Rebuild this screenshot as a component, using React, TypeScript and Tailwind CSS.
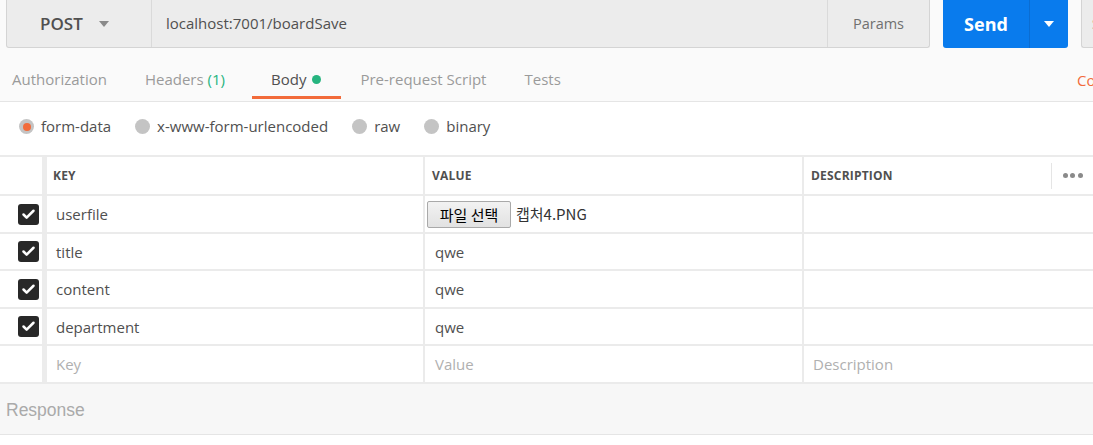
import { Check } from 'lucide-react'

const rows = [
  { key: 'userfile', value: '', file: true },
  { key: 'title', value: 'qwe' },
  { key: 'content', value: 'qwe' },
  { key: 'department', value: 'qwe' },
]

function Caret({ className }: { className: string }) {
  return (
    <svg width="10" height="6" viewBox="0 0 10 6" className={className}>
      <path d="M0 0 L10 0 L5 6 Z" fill="currentColor" />
    </svg>
  )
}

function Radio({ label, active }: { label: string; active?: boolean }) {
  return (
    <div className="flex items-center">
      <span className="w-[15px] h-[15px] rounded-full bg-[#c4c4c4] flex items-center justify-center">
        {active && <span className="w-[8px] h-[8px] rounded-full bg-[#f26b3a]" />}
      </span>
      <span className="ml-[7px] text-[15px] text-[#505050]">{label}</span>
    </div>
  )
}

export default function App() {
  return (
    <div className="w-[1093px] h-[445px] overflow-hidden bg-[#fafafa] font-['Open_Sans',sans-serif] flex flex-col">
      {/* Request bar */}
      <div className="flex h-[48px] pl-[6px] shrink-0">
        <div className="flex w-[924px] shrink-0 bg-[#ececec] border border-t-0 border-[#d4d4d4] rounded-b-[3px]">
          <div className="w-[145px] flex items-center pl-[33px] border-r border-[#dadada]">
            <span className="text-[17px] font-semibold text-[#505050]">POST</span>
            <Caret className="ml-[16px] text-[#8a8a8a]" />
          </div>
          <div className="flex-1 flex items-center pl-[14px] text-[15px] text-[#505050] border-r border-[#dadada]">
            localhost:7001/boardSave
          </div>
          <div className="w-[101px] flex items-center justify-center text-[14.5px] text-[#707070]">Params</div>
        </div>
        <div className="ml-[13px] w-[125px] shrink-0 flex bg-[#097bed] rounded-b-[3px]">
          <div className="w-[87px] flex items-center justify-center text-[18px] font-bold text-white border-r border-[#0a6dd3]">
            Send
          </div>
          <div className="flex-1 flex items-center justify-center">
            <Caret className="text-white" />
          </div>
        </div>
        <div className="ml-[13px] w-[12px] shrink-0 bg-[#ececec] border border-r-0 border-t-0 border-[#d4d4d4] rounded-bl-[3px] overflow-hidden flex items-center pl-[10px] text-[14px] text-[#707070] whitespace-nowrap">
          Save
        </div>
      </div>

      {/* Tabs */}
      <div className="mt-[10px] flex pb-[2px] border-b border-[#e5e5e5] shrink-0 text-[15px]">
        <div className="h-[41px] pl-[12px] pr-[19px] flex items-center pt-[4px] text-[#9a9a9a] border-b-[3px] border-transparent">Authorization</div>
        <div className="h-[41px] pl-[19px] pr-[27px] flex items-center pt-[4px] text-[#9a9a9a] border-b-[3px] border-transparent">
          Headers <span className="ml-[4px] text-[#26b47f]">(1)</span>
        </div>
        <div className="h-[41px] pl-[19px] pr-[20px] flex items-center pt-[4px] text-[#505050] border-b-[3px] border-[#f26b3a]">
          Body <span className="ml-[6px] w-[9px] h-[9px] rounded-full bg-[#26b47f]" />
        </div>
        <div className="h-[41px] px-[19px] flex items-center pt-[4px] text-[#9a9a9a] border-b-[3px] border-transparent">Pre-request Script</div>
        <div className="h-[41px] px-[19px] flex items-center pt-[4px] text-[#9a9a9a] border-b-[3px] border-transparent">Tests</div>
        <div className="flex-1" />
        <div className="w-[16px] shrink-0 overflow-hidden h-[41px] flex items-center pt-[4px] text-[#f26b3a] whitespace-nowrap">Cookies</div>
      </div>

      {/* Body type */}
      <div className="h-[53px] bg-white flex items-center pl-[19px] pb-[4px] gap-[24px] shrink-0">
        <Radio label="form-data" active />
        <Radio label="x-www-form-urlencoded" />
        <Radio label="raw" />
        <Radio label="binary" />
      </div>

      {/* Params table */}
      <div className="bg-white border-t-2 border-[#ebebeb] shrink-0">
        <div className="flex h-[39px] border-b-2 border-[#ebebeb] text-[12px] font-bold text-[#505050] tracking-[0.2px]">
          <div className="w-[42px]" />
          <div className="w-[381px] border-l-[5px] border-[#ececec] flex items-center pl-[6px]">KEY</div>
          <div className="w-[379px] border-l-2 border-[#ebebeb] flex items-center pl-[7px]">VALUE</div>
          <div className="flex-1 border-l-2 border-[#ebebeb] flex items-center pl-[7px]">
            DESCRIPTION
            <div className="ml-auto w-px h-[26px] bg-[#e5e5e5]" />
            <div className="w-[41px] flex items-center justify-center gap-[2.5px]">
              <span className="w-[5px] h-[5px] rounded-full bg-[#8a8a8a]" />
              <span className="w-[5px] h-[5px] rounded-full bg-[#8a8a8a]" />
              <span className="w-[5px] h-[5px] rounded-full bg-[#8a8a8a]" />
            </div>
          </div>
        </div>

        {rows.map(r => (
          <div key={r.key} className="flex h-[37.5px] border-b-2 border-[#ebebeb] text-[15px] text-[#505050]">
            <div className="w-[42px] flex items-center pl-[18px] pt-[1px]">
              <span className="w-[21px] h-[21px] rounded-[3px] bg-[#282828] flex items-center justify-center">
                <Check size={15} strokeWidth={4} className="text-white" />
              </span>
            </div>
            <div className="w-[381px] border-l-[5px] border-[#ececec] flex items-center pl-[9px] pt-[1px]">{r.key}</div>
            {r.file ? (
              <div className="w-[379px] border-l-2 border-[#ebebeb] flex items-center pl-[2px] pt-[1px]">
                <button className="h-[27px] w-[84px] rounded-[2px] border border-[#a9a9a9] bg-linear-to-b from-[#f2f2f2] to-[#e2e2e2] text-[15px] text-black font-['Noto_Sans_CJK_KR',sans-serif] leading-none">
                  파일 선택
                </button>
                <span className="ml-[5px] text-[15px] text-[#333] font-['Noto_Sans_CJK_KR',sans-serif]">캡처4.PNG</span>
              </div>
            ) : (
              <div className="w-[379px] border-l-2 border-[#ebebeb] flex items-center pl-[10px] pt-[1px]">{r.value}</div>
            )}
            <div className="flex-1 border-l-2 border-[#ebebeb]" />
          </div>
        ))}

        <div className="flex h-[37.5px] border-b-2 border-[#ebebeb] text-[15px] text-[#b0b0b0]">
          <div className="w-[42px]" />
          <div className="w-[381px] border-l-[5px] border-[#ececec] flex items-center pl-[9px] pt-[1px]">Key</div>
          <div className="w-[379px] border-l-2 border-[#ebebeb] flex items-center pl-[10px] pt-[1px]">Value</div>
          <div className="flex-1 border-l-2 border-[#ebebeb] flex items-center pl-[9px] pt-[1px]">Description</div>
        </div>
      </div>

      {/* Response */}
      <div className="h-[51px] bg-[#f7f7f7] border-b border-[#e5e5e5] flex items-center pl-[6px] pt-[3px] shrink-0">
        <span className="font-['Liberation_Sans',sans-serif] text-[17.5px] text-[#aaaaaa]">Response</span>
      </div>
      <div className="flex-1 bg-white" />
    </div>
  )
}
